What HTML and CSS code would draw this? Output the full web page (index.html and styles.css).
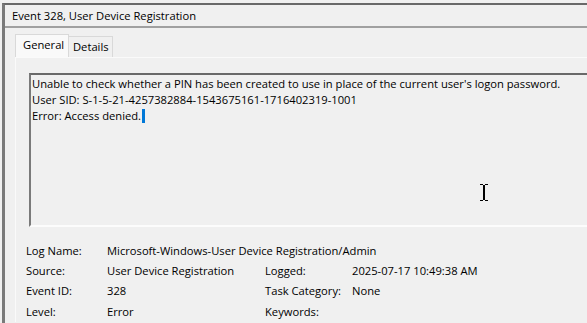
FILE: index.html
```html
<!DOCTYPE html>
<html lang="en">
<head>
  <meta charset="UTF-8" />
  <title>Event 328, User Device Registration</title>
  <link rel="stylesheet" href="styles.css">
</head>
<body>

  <div class="pane">
    <div class="pane-header">Event 328, User Device Registration</div>

    <div class="tabs">
      <div class="tab active">General</div>
      <div class="tab">Details</div>
    </div>

    <div class="tab-panel">
      <div class="message">
        <div>Unable to check whether a PIN has been created to use in place of the current user's logon password.</div>
        <div>User SID: S-1-5-21-4257382884-1543675161-1716402319-1001</div>
        <div>Error: Access denied.<span class="sel"></span></div>
        <svg class="ibeam" width="8" height="17" viewBox="0 0 8 17">
          <path d="M0 0.5h3M5 0.5h3M0 16.5h3M5 16.5h3" stroke="#000" stroke-width="1"/>
          <path d="M4 1v15" stroke="#000" stroke-width="2"/>
        </svg>
      </div>

      <div class="fields">
        <span class="lbl">Log Name:</span>
        <span class="val wide">Microsoft-Windows-User Device Registration/Admin</span>

        <span class="lbl">Source:</span>
        <span class="val">User Device Registration</span>
        <span class="lbl">Logged:</span>
        <span class="val">2025-07-17 10:49:38 AM</span>

        <span class="lbl">Event ID:</span>
        <span class="val">328</span>
        <span class="lbl">Task Category:</span>
        <span class="val">None</span>

        <span class="lbl">Level:</span>
        <span class="val">Error</span>
        <span class="lbl">Keywords:</span>
        <span class="val"></span>
      </div>
    </div>
  </div>

</body>
</html>
```

FILE: styles.css
```css
* { box-sizing: border-box; }

body {
  margin: 0;
  background-color: #f0f0f0;
  color: #000;
  font-family: 'Open Sans', 'Noto Sans', sans-serif;
  font-size: 11.2px;
  overflow: hidden;
  height: 323px;
}

.pane {
  margin: 3px 0 0 2px;
  border-top: 2px solid #696969;
  border-left: 3px solid #7a7a7a;
  height: 320px;
}

.pane-header {
  height: 23px;
  line-height: 21px;
  padding-left: 7px;
  border-bottom: 2px solid #a0a0a0;
}

.tabs {
  display: flex;
  align-items: flex-end;
  margin: 6px 0 0 10px;
  height: 23px;
}

.tab {
  height: 21px;
  line-height: 20px;
  padding: 0 4px;
  border: 1px solid #d9d9d9;
  border-bottom: none;
  background-color: #f0f0f0;
}

.tab.active {
  height: 23px;
  width: 54px;
  padding-left: 7px;
  background-color: #f9f9f9;
}

.tab + .tab {
  width: 44px;
  border-left: none;
}

.tab-panel {
  margin-left: 10px;
  border-top: 1px solid #fafafa;
  border-left: 1px solid #fafafa;
  padding: 15px 0 0 13px;
}

.message {
  position: relative;
  width: 620px;
  height: 154px;
  border-top: 2px solid #696969;
  border-left: 2px solid #7a7a7a;
  border-bottom: 2px solid #fcfcfc;
  padding: 1px 0 0 1px;
  line-height: 16px;
}

.sel {
  display: inline-block;
  width: 3px;
  height: 14px;
  margin-left: 1px;
  vertical-align: -3px;
  background-color: #0078d7;
}

.ibeam {
  position: absolute;
  left: 449px;
  top: 109px;
}

.fields {
  display: grid;
  grid-template-columns: 81px 158px 87px auto;
  grid-auto-rows: 20.4px;
  align-items: center;
  margin: 13px 0 0 -3px;
}

.val.wide {
  grid-column: 2 / 5;
}
```
